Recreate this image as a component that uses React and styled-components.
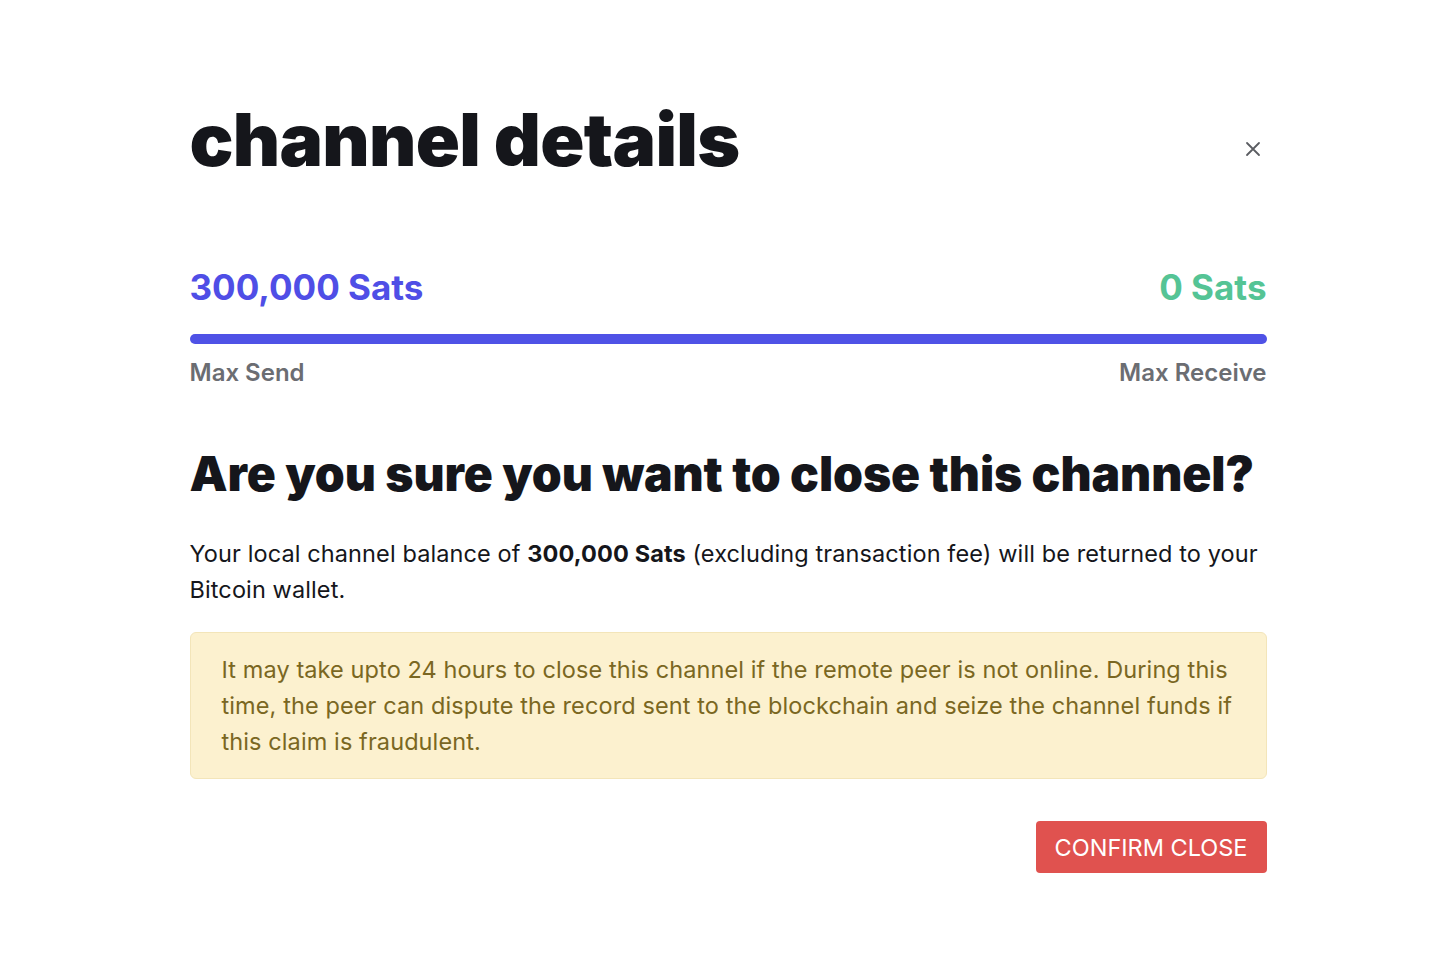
import React from "react";
import styled, { createGlobalStyle } from "styled-components";

const Global = createGlobalStyle`
  html, body { margin: 0; padding: 0; background: #fff; }
  body { font-family: Inter, "Noto Sans", sans-serif; color: #111318; }
`;

const Page = styled.div`
  width: 1077px;
  margin: 0 auto;
  padding-top: 96px;
  display: flex;
  flex-direction: column;
`;

const Header = styled.div`
  display: flex;
  align-items: center;
  justify-content: space-between;
`;

const Title = styled.h1`
  margin: 0;
  font-size: 73px;
  font-weight: 900;
  letter-spacing: -0.01em;
  line-height: 88px;
  color: #15161b;
`;

const CloseButton = styled.button`
  border: 0;
  background: none;
  padding: 0;
  margin-right: 3px;
  margin-top: 18px;
  width: 22px;
  height: 22px;
  display: flex;
  align-items: center;
  justify-content: center;
  cursor: pointer;
`;

const Balance = styled.div`
  margin-top: 81px;
  display: flex;
  flex-direction: column;
`;

const Row = styled.div`
  display: flex;
  justify-content: space-between;
  align-items: baseline;
`;

const Amount = styled.div`
  font-size: 35px;
  font-weight: 700;
  line-height: 44px;
  color: ${(p) => p.$color};
`;

const Bar = styled.div`
  height: 10px;
  border-radius: 5px;
  background: #4f52e6;
  margin-top: 25px;
  margin-bottom: 13px;
`;

const Label = styled.div`
  font-size: 24px;
  font-weight: 600;
  line-height: 32px;
  color: #6b6d72;
`;

const Question = styled.h2`
  margin: 55px 0 0;
  font-size: 48px;
  font-weight: 900;
  letter-spacing: -0.1px;
  line-height: 60px;
  color: #15161b;
`;

const Paragraph = styled.p`
  margin: 32px 0 0;
  font-size: 23.5px;
  letter-spacing: 0.11px;
  line-height: 36px;
  color: #15161b;
  b { font-weight: 700; }
`;

const Warning = styled.div`
  margin-top: 24px;
  background: #fcf1cf;
  border: 1px solid #f3e5b9;
  border-radius: 6px;
  padding: 19px 31px 18px;
  font-size: 23.5px;
  letter-spacing: 0.1px;
  line-height: 36px;
  color: #7a6722;
`;

const Actions = styled.div`
  margin-top: 42px;
  display: flex;
  justify-content: flex-end;
`;

const DangerButton = styled.button`
  border: 0;
  border-radius: 4px;
  background: #e0524f;
  color: #fff;
  font-family: Inter, "Noto Sans", sans-serif;
  font-size: 23.5px;
  font-weight: 400;
  height: 52px;
  padding: 0 19px;
  cursor: pointer;
`;

export default function App() {
  return (
    <>
      <Global />
      <Page>
        <Header>
          <Title>channel details</Title>
          <CloseButton aria-label="close">
            <svg width="16" height="16" viewBox="0 0 16 16" fill="none" stroke="#5b5d62" strokeWidth="1.8" strokeLinecap="round">
              <path d="M2 2L14 14M14 2L2 14" />
            </svg>
          </CloseButton>
        </Header>
        <Balance>
          <Row>
            <Amount $color="#4f4ee6">300,000 Sats</Amount>
            <Amount $color="#55c495">0 Sats</Amount>
          </Row>
          <Bar />
          <Row>
            <Label>Max Send</Label>
            <Label>Max Receive</Label>
          </Row>
        </Balance>
        <Question>Are you sure you want to close this channel?</Question>
        <Paragraph>
          Your local channel balance of <b>300,000 Sats</b> (excluding transaction fee) will be returned to your Bitcoin wallet.
        </Paragraph>
        <Warning>
          It may take upto 24 hours to close this channel if the remote peer is not online. During this time, the peer can dispute the record sent to the blockchain and seize the channel funds if this claim is fraudulent.
        </Warning>
        <Actions>
          <DangerButton>CONFIRM CLOSE</DangerButton>
        </Actions>
      </Page>
    </>
  );
}
